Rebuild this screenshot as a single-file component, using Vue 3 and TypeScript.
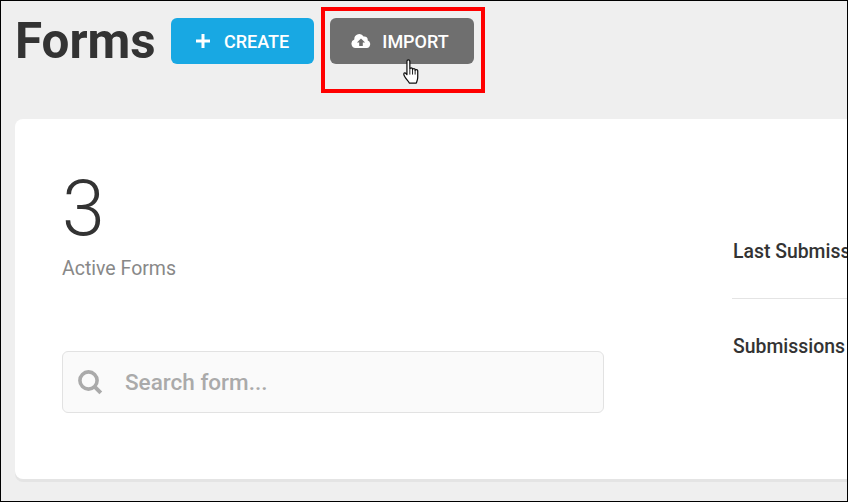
<script setup lang="ts">
const stats: { label: string }[] = [{ label: 'Last Submission' }, { label: 'Submissions' }]
</script>

<template>
  <div class="frame">
    <header class="head">
      <h1 class="title">Forms</h1>
      <button class="btn create" type="button">
        <svg class="plus" width="16" height="16" viewBox="0 0 16 16"><path d="M8 1v14M1 8h14" stroke="#fff" stroke-width="3" fill="none"/></svg>
        <span>CREATE</span>
      </button>
      <button class="btn import" type="button">
        <svg class="cloud" width="20" height="15" viewBox="0 0 20 15"><path fill="#fff" d="M16.6 6.3A3.1 3.1 0 0 0 12.6 2.6 5 5 0 0 0 3.3 5.1v.4A4.4 4.4 0 0 0 4.5 14h11.3a4 4 0 0 0 .8-7.7zM11.8 8.6v3.3H8.2V8.6H5.9L10 4.5l4.1 4.1z"/></svg>
        <span>IMPORT</span>
      </button>
      <div class="highlight"></div>
      <svg class="cursor" width="19" height="27" viewBox="0 0 18 26">
        <path fill="#fff" stroke="#111" stroke-width="1.2" stroke-linejoin="round" d="M4.6 2.4c0-2 2.8-2 2.8 0v7.2c0-1.4 2.6-1.4 2.6 0v.6c0-1.3 2.5-1.3 2.5 0v.8c0-1.2 2.5-1.2 2.5.2v6.4c0 2.6-.8 3.6-1.4 5.6H6.9c-1-2-3-3.6-4.5-6.3-.9-1.7-1.2-2.7-.5-3.3.8-.6 1.8 0 2.7 1.5z"/>
        <path stroke="#111" stroke-width=".9" d="M7.4 10v5M10 10.4v4.6M12.5 11v4"/>
      </svg>
    </header>

    <main class="card">
      <section class="left">
        <div class="count">3</div>
        <div class="caption">Active Forms</div>
        <div class="search">
          <svg width="26" height="26" viewBox="0 0 26 26"><circle cx="11.5" cy="11.5" r="8.6" fill="none" stroke="#aaa" stroke-width="3.6"/><path d="M17.8 17.8l6 6" stroke="#aaa" stroke-width="4" fill="none"/></svg>
          <span class="placeholder">Search form...</span>
        </div>
      </section>
      <section class="right">
        <div v-for="s in stats" :key="s.label" class="stat">{{ s.label }}</div>
      </section>
    </main>
  </div>
</template>

<style>
html, body { margin: 0; background: #efefef; }
</style>

<style scoped>
.frame {
  box-sizing: border-box;
  position: relative;
  width: 848px;
  height: 502px;
  overflow: hidden;
  background: #efefef;
  border: 1px solid #000;
  font-family: Roboto, "Liberation Sans", sans-serif;
  color: #333;
}
.head {
  display: flex;
  align-items: center;
  height: 46px;
  margin-top: 17px;
  padding-left: 14px;
  gap: 16px;
}
.title {
  margin: 0;
  width: 140px;
  font-size: 49.4px;
  font-weight: 700;
  line-height: 46px;
  color: #333;
}
.btn {
  display: flex;
  align-items: center;
  justify-content: center;
  height: 46px;
  width: 143px;
  border: 0;
  border-radius: 6px;
  color: #fff;
  font-family: inherit;
  font-size: 18px;
  font-weight: 500;
  padding: 0;
}
.create { background: #18a8e3; gap: 13px; padding-right: 1px; }
.import { background: #6f6f6f; width: 144px; gap: 11px; padding-right: 4px; }
.highlight {
  position: absolute;
  left: 320px;
  top: 6px;
  width: 164px;
  height: 86px;
  box-sizing: border-box;
  border: 4px solid #f00;
}
.cursor {
  position: absolute;
  left: 401px;
  top: 58px;
}
.card {
  display: flex;
  box-sizing: border-box;
  width: 1000px;
  height: 360px;
  margin: 55px 0 0 14px;
  padding: 47px 47px 0;
  background: #fff;
  border-radius: 8px;
  box-shadow: 0 3px 0 #e4e4e4;
}
.left { width: 542px; flex: none; }
.count {
  font-size: 77px;
  font-weight: 350;
  line-height: 86px;
  color: #333;
}
.caption {
  margin-top: 4px;
  font-size: 19.5px;
  line-height: 26px;
  color: #888;
}
.search {
  display: flex;
  align-items: center;
  gap: 22px;
  box-sizing: border-box;
  height: 62px;
  margin-top: 69px;
  padding-left: 14px;
  background: #fafafa;
  border: 1px solid #e2e2e2;
  border-radius: 6px;
}
.placeholder {
  font-size: 22.5px;
  font-weight: 500;
  color: #aaa;
}
.right {
  margin-left: 128px;
  flex: 1;
  padding-top: 73px;
}
.stat {
  font-size: 19.4px;
  font-weight: 500;
  line-height: 26px;
  color: #333;
  white-space: nowrap;
  padding-left: 1px;
  padding-bottom: 33px;
}
.stat + .stat {
  border-top: 1px solid #e4e4e4;
  padding-top: 35px;
}
</style>
